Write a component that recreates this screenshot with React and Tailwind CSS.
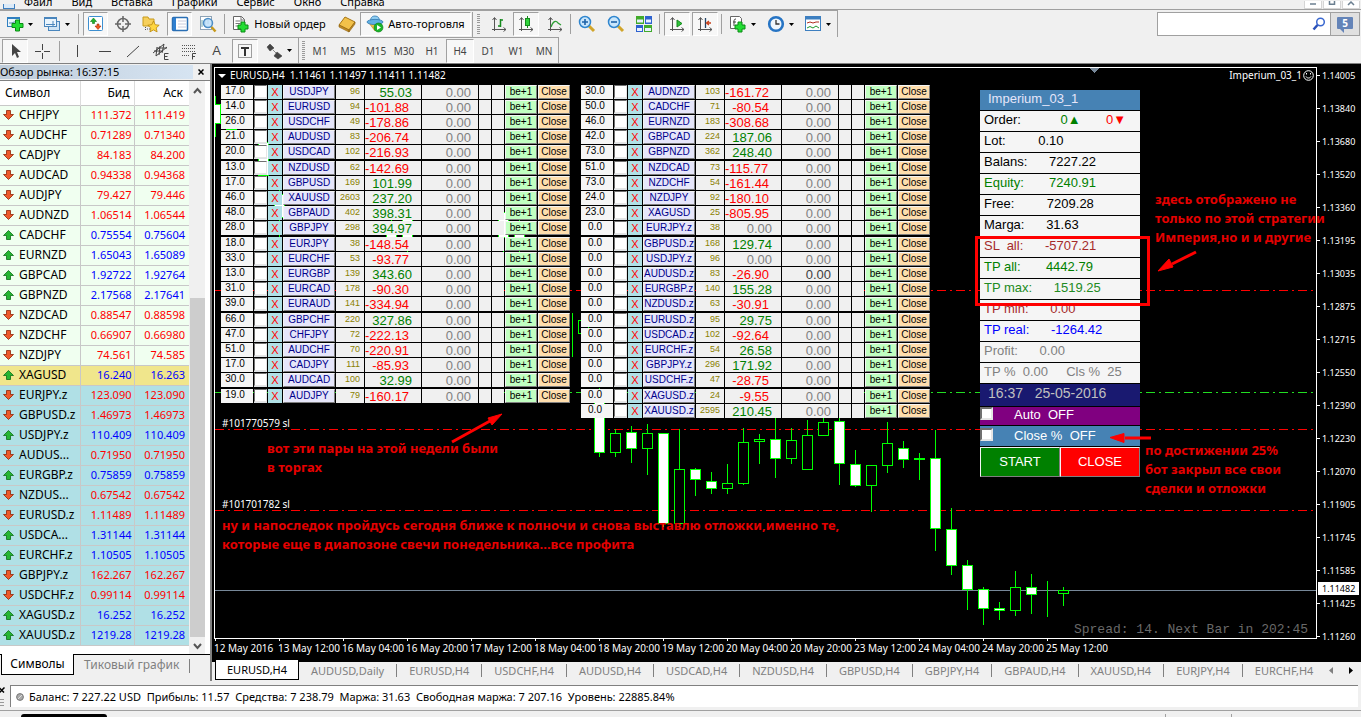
import React from "react";

const UI = "font-['Noto_Sans','Open_Sans',sans-serif]";

/* ---------- data ---------- */

const MENU = ["Файл", "Вид", "Вставка", "Графики", "Сервис", "Окно", "Справка"];

const QUOTES = [
  ["CHFJPY", "111.372", "111.419", 0], ["AUDCHF", "0.71289", "0.71340", 0],
  ["CADJPY", "84.183", "84.200", 0], ["AUDCAD", "0.94338", "0.94368", 0],
  ["AUDJPY", "79.427", "79.446", 0], ["AUDNZD", "1.06514", "1.06544", 0],
  ["CADCHF", "0.75554", "0.75604", 1], ["EURNZD", "1.65043", "1.65089", 1],
  ["GBPCAD", "1.92722", "1.92764", 1], ["GBPNZD", "2.17568", "2.17641", 1],
  ["NZDCAD", "0.88547", "0.88598", 0], ["NZDCHF", "0.66907", "0.66980", 0],
  ["NZDJPY", "74.561", "74.585", 0], ["XAGUSD", "16.240", "16.263", 1],
  ["EURJPY.z", "123.090", "123.090", 0], ["GBPUSD.z", "1.46973", "1.46973", 0],
  ["USDJPY.z", "110.409", "110.409", 1], ["AUDUS...", "0.71950", "0.71950", 0],
  ["EURGBP.z", "0.75859", "0.75859", 1], ["NZDUS...", "0.67542", "0.67542", 0],
  ["EURUSD.z", "1.11489", "1.11489", 0], ["USDCA...", "1.31144", "1.31144", 1],
  ["EURCHF.z", "1.10505", "1.10505", 1], ["GBPJPY.z", "162.267", "162.267", 0],
  ["USDCHF.z", "0.99114", "0.99114", 0], ["XAGUSD.z", "16.252", "16.252", 1],
  ["XAUUSD.z", "1219.28", "1219.28", 1],
];

const PAIRS_LEFT = [
  ["17.0", "USDJPY", "96", "55.03"], ["14.0", "EURUSD", "94", "-101.88"],
  ["26.0", "USDCHF", "49", "-178.86"], ["21.0", "AUDUSD", "83", "-206.74"],
  ["20.0", "USDCAD", "102", "-216.93"], ["13.0", "NZDUSD", "62", "-142.69"],
  ["17.0", "GBPUSD", "169", "101.99"], ["46.0", "XAUUSD", "2603", "237.20"],
  ["48.0", "GBPAUD", "402", "398.31"], ["28.0", "GBPJPY", "298", "394.97"],
  ["18.0", "EURJPY", "38", "-148.54"], ["33.0", "EURCHF", "53", "-93.77"],
  ["13.0", "EURGBP", "139", "343.60"], ["31.0", "EURCAD", "178", "-90.30"],
  ["39.0", "EURAUD", "141", "-334.94"], ["66.0", "GBPCHF", "220", "327.86"],
  ["47.0", "CHFJPY", "72", "-222.13"], ["51.0", "AUDCHF", "70", "-220.91"],
  ["17.0", "CADJPY", "111", "-85.93"], ["30.0", "AUDCAD", "100", "32.99"],
  ["19.0", "AUDJPY", "79", "-160.17"],
];

const PAIRS_RIGHT = [
  ["30.0", "AUDNZD", "103", "-161.72"], ["50.0", "CADCHF", "71", "-80.54"],
  ["46.0", "EURNZD", "183", "-308.68"], ["42.0", "GBPCAD", "224", "187.06"],
  ["73.0", "GBPNZD", "362", "248.40"], ["51.0", "NZDCAD", "73", "-115.77"],
  ["73.0", "NZDCHF", "54", "-161.44"], ["24.0", "NZDJPY", "92", "-180.10"],
  ["23.0", "XAGUSD", "25", "-805.95"], ["0.0", "EURJPY.z", "38", "0.00"],
  ["0.0", "GBPUSD.z", "168", "129.74"], ["0.0", "USDJPY.z", "96", "0.00"],
  ["0.0", "AUDUSD.z", "83", "-26.90", true], ["0.0", "EURGBP.z", "140", "155.28"],
  ["0.0", "NZDUSD.z", "63", "-30.91"], ["0.0", "EURUSD.z", "95", "29.75"],
  ["0.0", "USDCAD.z", "102", "-92.64"], ["0.0", "EURCHF.z", "54", "26.58"],
  ["0.0", "GBPJPY.z", "296", "171.92"], ["0.0", "USDCHF.z", "47", "-28.75"],
  ["0.0", "XAGUSD.z", "24", "-9.55"], ["0.0", "XAUUSD.z", "2595", "210.45"],
];

const STATS = [
  ["Lot:         0.10", "text-black"],
  ["Balans:      7227.22", "text-black"],
  ["Equity:       7240.91", "text-[#008000]"],
  ["Free:         7209.28", "text-black"],
  ["Marga:      31.63", "text-black"],
  ["SL  all:      -5707.21", "text-[#a52a2a]"],
  ["TP all:       4442.79", "text-[#008000]"],
  ["TP max:      1519.25", "text-[#228b22]"],
  ["TP min:      0.00", "text-[#a52a2a]"],
  ["TP real:      -1264.42", "text-[#0000ff]"],
  ["Profit:      0.00", "text-[#808080]"],
  ["TP %  0.00     Cls %  25", "text-[#808080]"],
];

const PRICES = [
  "1.14005", "1.13840", "1.13680", "1.13520", "1.13360", "1.13195", "1.13035", "1.12875", "1.12715",
  "1.12550", "1.12390", "1.12230", "1.12070", "1.11905", "1.11745", "1.11585", "1.11425", "1.11260",
];

const TIMES = [
  "12 May 2016", "13 May 12:00", "16 May 04:00", "16 May 20:00", "17 May 12:00", "18 May 04:00", "18 May 20:00",
  "19 May 12:00", "20 May 04:00", "20 May 20:00", "23 May 12:00", "24 May 04:00", "24 May 20:00", "25 May 12:00",
];

const CHART_TABS = [
  "EURUSD,H4", "AUDUSD,Daily", "EURUSD,H4", "USDCHF,H4", "AUDUSD,H4", "USDCAD,H4", "NZDUSD,H4",
  "GBPUSD,H4", "GBPJPY,H4", "GBPAUD,H4", "XAUUSD,H4", "EURJPY,H4", "EURCHF,H4",
];

/* filled?, high, body top, body bottom, low */
const FIRST_X = 384;
const CANDLES = [
  [1, 320, 330, 385, 389], [0, 361, 365, 385, 389], [1, 358, 364, 381, 395], [0, 356, 365, 381, 407],
  [1, 365, 365, 456, 459], [0, 361, 401, 456, 459], [1, 400, 401, 412, 428], [1, 404, 413, 421, 426],
  [0, 396, 415, 421, 426], [0, 360, 374, 416, 417], [0, 366, 371, 374, 396], [1, 350, 371, 391, 410],
  [0, 360, 372, 391, 396], [0, 352, 367, 402, 402], [0, 348, 354, 368, 368], [1, 350, 353, 396, 417],
  [1, 382, 396, 418, 419], [0, 397, 397, 418, 444], [0, 354, 375, 398, 405], [1, 373, 380, 392, 400],
  [0, 385, 390, 392, 412], [1, 362, 390, 461, 483], [1, 440, 461, 498, 507], [1, 492, 497, 522, 542],
  [1, 519, 521, 541, 557], [1, 534, 540, 543, 552], [0, 503, 519, 543, 548], [1, 506, 519, 527, 546],
  [1, 513, 526, 527, 549], [0, 519, 522, 526, 538],
];

/* older candles that lie under the order grid: x, high, body top, body bottom, low */
const HIDDEN_CANDLES = [
  [16, 55, 58, 62, 70], [48, 70, 74, 108, 110], [64, 108, 126, 150, 169], [176, 140, 166, 172, 180],
  [192, 140, 144, 170, 184], [288, 140, 144, 170, 184], [304, 148, 166, 172, 190],
];

/* ---------- toolbar ---------- */

const PRESSED = "border border-b-white border-l-[#a0a0a0] border-r-white border-t-[#a0a0a0] bg-[#f7f7f7]";

function Tool({ label, w = "w-7", on, children }) {
  return (
    <button
      type="button"
      aria-label={label}
      className={`flex h-6 shrink-0 items-center justify-center gap-1 ${w} ${on ? PRESSED : ""}`}
    >
      {children}
    </button>
  );
}

const Icon = ({ children, size = 18 }) => (
  <svg width={size} height={size} viewBox="0 0 18 18" fill="none" className="shrink-0">
    {children}
  </svg>
);
const Caret = () => (
  <svg width="5" height="3" viewBox="0 0 5 3" className="shrink-0">
    <path d="M0 0h5L2.5 3z" fill="#000" />
  </svg>
);
const Sep = () => <span className="h-5 w-px shrink-0 bg-[#a0a0a0]" />;
const Grip = () => (
  <span className="flex h-5 w-[3px] shrink-0 flex-col justify-between">
    {Array.from({ length: 10 }, (_, i) => (
      <span key={i} className="h-px w-full bg-[#9a9a9a]" />
    ))}
  </span>
);

const Plus = ({ x = 7, y = 7 }) => (
  <path
    d={`M${x + 3} ${y}h4v3h3v4h-3v3h-4v-3h-3v-4h3z`}
    fill="#22dd33" stroke="#0a8a14" strokeWidth="1"
  />
);
const Axes = () => (
  <path d="M4.5 16V3M2.5 5l2-2.5L6.5 5M2 14.5h14M13.5 12.5l2.5 2-2.5 2" stroke="#555" />
);

function MainToolbar() {
  return (
    <div className="flex h-[27px] items-center border-r border-t border-[#a0a0a0] pr-px">
      <Tool label="Новый график" w="w-[38px]">
        <Icon>
          <rect x="1.5" y="2.5" width="12" height="9" fill="#eaf5fd" stroke="#2f7fc0" />
          <path d="M2 3.500h11" stroke="#2f7fc0" />
          <path d="M3 8h3l2-1h4" stroke="#58a" />
          <path d="M9.500 5h4v3.500h3.500v4h-3.500V16h-4v-3.500H6v-4h3.500z" fill="#22dd33" stroke="#0a8a14" />
        </Icon>
        <Caret />
      </Tool>
      <Tool label="Профили" w="w-9">
        <Icon>
          <rect x="5.5" y="6.5" width="11" height="9" fill="#cfe4f5" stroke="#4a86bd" />
          <rect x="1.5" y="2.5" width="12" height="9" fill="#eaf5fd" stroke="#4a86bd" />
          <path d="M2 3.500h11M3 9.5h9M10 6v5" stroke="#4a86bd" />
        </Icon>
        <Caret />
      </Tool>
      <span className="w-1" />
      <Sep />
      <span className="w-1" />
      <Tool label="Обзор рынка" w="w-[25px]" on>
        <Icon>
          <rect x="1.5" y="1.5" width="14" height="14" rx="1" fill="#fff" stroke="#3d8fd0" />
          <path d="M6.5 3l3 3.500H7.500v2h-2v-2h-2z" fill="#1fb52b" stroke="#0b7a17" strokeWidth=".6" />
          <path d="M11 14.500l-3-3.500h2V9h2v2h2z" fill="#f2581e" stroke="#a02c08" strokeWidth=".6" />
        </Icon>
      </Tool>
      <Tool label="Окно данных" w="w-[30px]">
        <Icon>
          <circle cx="9" cy="9" r="5.5" stroke="#666" strokeWidth="1.5" />
          <path d="M9 1v6M9 11v6M1 9h6M11 9h6" stroke="#666" strokeWidth="1.5" />
        </Icon>
      </Tool>
      <Tool label="Навигатор" w="w-[25px]">
        <Icon>
          <path d="M1 2h5l1 2h5v7H1z" fill="#f6cf5b" stroke="#c79a1c" />
          <path d="M3.500 12v4M5 14h3" stroke="#555" strokeDasharray="1 1" />
          <path d="M11.500 6l1.700 3.700 4 .5-3 2.700.9 4-3.600-2-3.600 2 .9-4-3-2.700 4-.5z" fill="#ffd640" stroke="#b8860b" strokeWidth=".8" />
        </Icon>
      </Tool>
      <span className="w-1" />
      <Tool label="Терминал" w="w-[25px]" on>
        <Icon>
          <rect x="1.5" y="2.5" width="15" height="13" rx="1" fill="#fff" stroke="#2a6fb5" strokeWidth="1.5" />
          <path d="M2 3h3v12H2z" fill="#2f7fd0" />
          <path d="M7 6h8M7 9h8M7 12h8" stroke="#ccd" />
        </Icon>
      </Tool>
      <Tool label="Тестер стратегий" w="w-8">
        <Icon>
          <rect x="1.5" y="1.5" width="11" height="13" fill="#fff" stroke="#8ea3b5" />
          <path d="M3 5v7M6 4v8M9 3v6" stroke="#7aa" />
          <circle cx="9" cy="8" r="4.5" fill="#bfe0fa" fillOpacity=".85" stroke="#4d8ec6" strokeWidth="1.5" />
          <path d="M12.500 12l4 4.500" stroke="#c79a1c" strokeWidth="2.5" />
        </Icon>
      </Tool>
      <Sep />
      <Tool label="Новый ордер" w="w-[108px]">
        <Icon>
          <path d="M1.500 1.500h8l3 3v10h-11z" fill="#fff" stroke="#666" />
          <path d="M9 1.500V5h3.500M3.500 6h6M3.500 8.500h5M3.500 11h3" stroke="#777" />
          <Plus x={6} y={7} />
        </Icon>
        <span className="text-[11px] leading-4">Новый ордер</span>
      </Tool>
      <span className="w-px" />
      <Tool label="Редактор MetaQuotes" w="w-[25px]">
        <Icon>
          <path d="M1 10l6-8 10 5-6 8z" fill="#f2c14a" stroke="#a67514" />
          <path d="M1 10v2l10 5v-2zM11 15v2L17 9V7z" fill="#c78f22" stroke="#8a5f10" strokeWidth=".6" />
        </Icon>
      </Tool>
      <span className="w-px" />
      <Tool label="Авто-торговля" w="w-[111px]" on>
        <Icon>
          <path d="M3 8l6 8 6-8z" fill="#efc343" stroke="#b3851a" strokeWidth=".6" />
          <path d="M4.500 6c0-2.500 1-5 4.500-5s4.500 2.500 4.500 5z" fill="#8fcdf2" stroke="#3079b0" strokeWidth=".8" />
          <ellipse cx="9" cy="7" rx="8" ry="2.6" fill="#5fb0e4" stroke="#3079b0" strokeWidth=".8" />
          <circle cx="12.5" cy="12.5" r="4.5" fill="#19b52a" stroke="#0b7a17" strokeWidth=".6" />
          <path d="M11 10l4 2.500-4 2.500z" fill="#fff" />
        </Icon>
        <span className="text-[11px] leading-4">Авто-торговля</span>
      </Tool>
      <span className="w-px" />
      <span className="h-[25px] w-px bg-[#a0a0a0]" />
      <span className="w-1" />
      <Grip />
      <span className="w-1" />
      <Tool label="Бары" w="w-[29px]">
        <Icon>
          <Axes />
          <path d="M10.500 4v8M8 11h2.500M10.500 5H13" stroke="#168a1e" strokeWidth="1.5" />
        </Icon>
      </Tool>
      <Tool label="Свечи" w="w-[26px]" on>
        <Icon>
          <Axes />
          <path d="M10.500 1v12" stroke="#168a1e" />
          <rect x="8.5" y="3.5" width="4" height="7" fill="#2fd43a" stroke="#168a1e" />
        </Icon>
      </Tool>
      <Tool label="Линия" w="w-[31px]">
        <Icon>
          <Axes />
          <path d="M5 12c2-6 5-7 7-4l3 2" stroke="#30a038" strokeWidth="1.3" />
        </Icon>
      </Tool>
      <Sep />
      <Tool label="Увеличить" w="w-8">
        <Icon>
          <path d="M10 10l6 6" stroke="#d1a52a" strokeWidth="3" />
          <circle cx="7" cy="7" r="5.5" fill="#c9e6fb" stroke="#2f86cf" strokeWidth="1.5" />
          <path d="M4 7h6M7 4v6" stroke="#1e63a8" strokeWidth="1.6" />
        </Icon>
      </Tool>
      <Tool label="Уменьшить" w="w-[26px]">
        <Icon>
          <path d="M10 10l6 6" stroke="#d1a52a" strokeWidth="3" />
          <circle cx="7" cy="7" r="5.5" fill="#c9e6fb" stroke="#2f86cf" strokeWidth="1.5" />
          <path d="M4 7h6" stroke="#1e63a8" strokeWidth="1.6" />
        </Icon>
      </Tool>
      <Tool label="Мозаика" w="w-[30px]">
        <Icon>
          <path d="M1 1h8v8H1zM9 10h8v7H9z" fill="#41ab2a" />
          <path d="M10 1h7v8h-7zM1 10h7v7H1z" fill="#2d62cf" />
          <path d="M2 6h6M11 6h5M2 14.500h5M10 14.500h6" stroke="#e8f0ff" strokeWidth="3" />
        </Icon>
      </Tool>
      <Sep />
      <span className="w-1" />
      <Tool label="Автопрокрутка" w="w-[26px]" on>
        <Icon>
          <Axes />
          <path d="M9 5l5 3.500L9 12z" fill="#2fc43a" stroke="#168a1e" />
        </Icon>
      </Tool>
      <span className="w-[2px]" />
      <Tool label="Сдвиг графика" w="w-[26px]" on>
        <Icon>
          <Axes />
          <path d="M9.500 3v10" stroke="#246" strokeWidth="1.3" />
          <path d="M15 8h-4M13 6l-2.500 2 2.500 2" stroke="#c8401a" strokeWidth="1.3" />
        </Icon>
      </Tool>
      <span className="w-[3px]" />
      <Sep />
      <Tool label="Индикаторы" w="w-10">
        <Icon>
          <path d="M1.500 1.500h9l2 2v10h-11z" fill="#fff" stroke="#666" />
          <path d="M7 4c-2 0-2 1-2 3v4M4 7h3" stroke="#444" />
          <Plus x={6} y={7} />
        </Icon>
        <Caret />
      </Tool>
      <Tool label="Периоды" w="w-9">
        <Icon>
          <circle cx="9" cy="9" r="6.8" fill="#eef6fd" stroke="#2674c4" strokeWidth="2.6" />
          <path d="M9 5v4h3.500" stroke="#333" strokeWidth="1.3" />
        </Icon>
        <Caret />
      </Tool>
      <Tool label="Шаблоны" w="w-[38px]">
        <Icon>
          <rect x="1.5" y="1.5" width="15" height="14" fill="#fff" stroke="#3d7fc0" />
          <path d="M2 3h14" stroke="#3d7fc0" strokeWidth="3" />
          <path d="M3 8l3-1 3 1 3-1h3" stroke="#b03020" />
          <path d="M3 13l3-1.500 3 1.500 3-2 3 2" stroke="#1c9a2a" />
        </Icon>
        <Caret />
      </Tool>
    </div>
  );
}

const FRAMES = ["M1", "M5", "M15", "M30", "H1", "H4", "D1", "W1", "MN"];

function DrawingToolbar() {
  return (
    <div className="flex h-[26px] w-[559px] items-center border-r border-t border-[#a0a0a0] pl-[2px]">
      <Tool label="Курсор" w="w-[26px]" on>
        <Icon>
          <path d="M6 2v12l3-3 2 5 2-1-2-5h4z" fill="#444" />
        </Icon>
      </Tool>
      <Tool label="Перекрестие" w="w-7">
        <Icon>
          <path d="M9.500 2v6M9.500 11v6M2 9.500h6M11 9.500h6" stroke="#444" />
        </Icon>
      </Tool>
      <span className="w-[3px]" />
      <Sep />
      <span className="w-[3px]" />
      <Tool label="Вертикальная линия">
        <Icon><path d="M9.500 3v12" stroke="#444" /></Icon>
      </Tool>
      <Tool label="Горизонтальная линия">
        <Icon><path d="M3 9.500h12" stroke="#444" /></Icon>
      </Tool>
      <Tool label="Трендовая линия">
        <Icon><path d="M3 15L15 4" stroke="#444" /></Icon>
      </Tool>
      <Tool label="Равноудаленный канал">
        <Icon>
          <path d="M1 11L12 2M4 14l11-9M5 5l-1 9M8 4l-1 9M12 2l-2 9M2 9h9M5 6h10" stroke="#444" />
          <path d="M16.500 11.500h-4v6h4M12.500 14.500h3" stroke="#444" />
        </Icon>
      </Tool>
      <Tool label="Линии Фибоначчи">
        <Icon>
          <path d="M2 3.500h14M2 6.500h14M2 9.500h14M2 13.500h8" stroke="#555" strokeDasharray="1 1" />
          <path d="M16 11.500h-3.500v6M12 14.500h3" stroke="#444" />
        </Icon>
      </Tool>
      <Tool label="Текст">
        <span className="font-['Liberation_Sans',sans-serif] text-[13px] leading-4 text-[#444]">A</span>
      </Tool>
      <span className="w-[2px]" />
      <Tool label="Текстовая метка" w="w-[26px]" on>
        <Icon>
          <rect x="2.5" y="2.5" width="13" height="13" stroke="#444" strokeDasharray="1 1" />
          <path d="M5 6h8M9 6v8" stroke="#333" strokeWidth="2" />
        </Icon>
      </Tool>
      <Tool label="Стрелки" w="w-10">
        <Icon>
          <path d="M2 5l3-3 4 4-4 3zM8 8l6 6M9 14l3-4 5 4-4 3z" fill="#444" stroke="#444" strokeWidth=".6" />
        </Icon>
        <Caret />
      </Tool>
      <span className="h-[25px] w-px bg-[#a0a0a0]" />
      <span className="w-[3px]" />
      <Grip />
      <span className="w-px" />
      {FRAMES.map((f) => (
        <button
          key={f}
          type="button"
          className={`flex h-6 w-7 shrink-0 items-center justify-center text-[10px] leading-4 text-[#444] ${f === "H4" ? PRESSED : ""}`}
        >
          {f}
        </button>
      ))}
    </div>
  );
}

function TopBars() {
  return (
    <header className="shrink-0">
      <div className="flex h-[9px] items-end overflow-hidden">
        <span className="ml-[3px] mr-[9px] h-[5px] w-3 shrink-0 border-x border-b border-[#3d7fc0] bg-[#dbeaf8]" />
        <nav className="flex items-end gap-[19px]">
          {MENU.map((m) => (
            <button key={m} type="button" className="text-[11px] leading-[14px]">{m}</button>
          ))}
        </nav>
        <div className="ml-auto flex h-2 shrink-0 gap-px pr-px">
          {["Свернуть", "Развернуть", "Закрыть"].map((l, i) => (
            <button key={l} type="button" aria-label={l} className="flex h-2 w-[18px] justify-center border border-t-0 border-[#d5d5d5] bg-white">
              <svg width="8" height="5" viewBox="0 0 8 5" fill="none" stroke="#6b7f90" strokeWidth="1.5">
                {i === 0 && <path d="M1 3h6" />}
                {i === 1 && <path d="M1.500 0v3.200h5V0" />}
                {i === 2 && <path d="M1 4l3-3 3 3" />}
              </svg>
            </button>
          ))}
        </div>
      </div>
      <div className="flex h-[54px] items-start justify-between border-t border-[#a0a0a0]">
        <div className="flex flex-col items-start">
          <MainToolbar />
          <DrawingToolbar />
        </div>
        <div className="mr-px mt-[2px] flex h-6 border border-[#a0a0a0] bg-white">
          <label className="flex items-center">
            <input type="text" aria-label="Поиск" className="h-5 w-[154px] bg-transparent px-1 text-[11px] outline-none" />
            <svg width="14" height="14" viewBox="0 0 14 14" fill="none" className="mr-1">
              <circle cx="8.5" cy="5" r="3.8" stroke="#3a68d0" strokeWidth="1.5" />
              <path d="M5.500 8L1.500 12.500" stroke="#2a50b8" strokeWidth="2.5" />
            </svg>
          </label>
          <button type="button" aria-label="Сообщения" className="flex w-[29px] items-center justify-center border-l border-[#a0a0a0] bg-[#e0e0e0]">
            <span className="relative mb-[3px] flex h-3 w-4 items-center justify-center rounded-[1px] bg-[#6484b8] font-bold text-[10px] leading-3 text-white">
              5
              <svg width="5" height="4" viewBox="0 0 5 4" className="absolute left-[3px] top-3">
                <path d="M0 0h4v4z" fill="#6484b8" />
              </svg>
            </span>
          </button>
        </div>
      </div>
    </header>
  );
}

/* ---------- market watch ---------- */

const Arrow = ({ up }) => (
  <svg width="11" height="10" viewBox="0 0 11 10" className="shrink-0">
    {up ? (
      <path d="M5.500.5l5 5h-3v4h-4v-4h-3z" fill="#25b632" stroke="#0d6d17" strokeWidth=".8" />
    ) : (
      <path d="M5.500 9.500l-5-5h3v-4h4v4h3z" fill="#ee5a2a" stroke="#8f2506" strokeWidth=".8" />
    )}
  </svg>
);

function quoteTone(i) {
  if (i < 13) return "bg-[#f0fff0]";
  if (i === 13) return "bg-[#f0e68c]";
  return "bg-[#b0e0e6]";
}

function MarketWatch() {
  return (
    <aside className="flex w-[210px] shrink-0 flex-col border-t border-[#808080]">
      <div className="flex h-4 items-center justify-between pr-[3px]">
        <h2 className="h-[14px] flex-1 bg-linear-to-r from-[#bfcddb] to-[#d6e4f2] text-[11px] leading-[14px] text-black">
          Обзор рынка: 16:37:15
        </h2>
        <button type="button" aria-label="Закрыть панель" className="ml-[2px] flex size-3 items-center justify-center">
          <svg width="6" height="6" viewBox="0 0 6 6" stroke="#000" strokeWidth="1.5"><path d="M.5.5l5 5M5.500.5l-5 5" /></svg>
        </button>
      </div>
      <div className="flex min-h-0 flex-1 border-t border-[#808080] bg-white">
        <div className="min-w-0 flex-1">
          <table className="w-full table-fixed border-collapse">
            <colgroup>
              <col className="w-20" />
              <col className="w-[54px]" />
              <col />
            </colgroup>
            <thead>
              <tr className="h-6 border-b border-[#c8c8c8] text-[12px] leading-4">
                <th className="border-r border-[#dcdcdc] p-0 pl-[5px] text-left font-normal">Символ</th>
                <th className="border-r border-[#dcdcdc] p-0 pr-1 text-right font-normal">Бид</th>
                <th className="p-0 pr-[6px] text-right font-normal">Аск</th>
              </tr>
            </thead>
            <tbody>
              {QUOTES.map(([s, bid, ask, up], i) => {
                const tone = up ? "text-[#0000ff]" : "text-[#ff0000]";
                return (
                  <tr key={s} className={`h-5 border-b border-[#c8c8c8] ${quoteTone(i)}`}>
                    <td className="border-r border-[#c8c8c8] p-0">
                      <div className="flex items-center gap-[5px] pl-[3px] text-[12px] leading-4">
                        <Arrow up={up} />
                        {s}
                      </div>
                    </td>
                    <td className={`border-r border-[#c8c8c8] p-0 pr-[2px] text-right text-[11px] leading-4 ${tone}`}>{bid}</td>
                    <td className={`p-0 pr-1 text-right text-[11px] leading-4 ${tone}`}>{ask}</td>
                  </tr>
                );
              })}
            </tbody>
          </table>
        </div>
        <div className="mr-[5px] flex w-4 shrink-0 flex-col items-center bg-[#f0f0f0]">
          <svg width="9" height="17" viewBox="0 0 9 17" fill="none" stroke="#555" strokeWidth="2"><path d="M1 12l3.500-4L8 12" /></svg>
          <div className="flex-[201]" />
          <div className="w-[15px] flex-[340] bg-[#cdcdcd]" />
          <svg width="9" height="17" viewBox="0 0 9 17" fill="none" stroke="#555" strokeWidth="2"><path d="M1 7l3.500 4L8 7" /></svg>
        </div>
      </div>
      <div className="flex h-[27px] items-start border-t border-black pl-px text-[12px] leading-4">
        <button type="button" className="-mt-px h-[21px] w-[73px] border border-t-0 border-black bg-white">Символы</button>
        <button type="button" className="h-5 pl-[10px] pr-[10px] text-[#808080]">Тиковый график</button>
        <span className="mt-1 h-[14px] w-px bg-[#808080]" />
      </div>
    </aside>
  );
}

/* ---------- order grid ---------- */

const BEVEL = "border border-b-[#808080] border-l-[#f4f4f4] border-r-[#808080] border-t-[#f4f4f4]";

function padded(v) {
  return "  ".repeat(7 - v.length) + v;
}
function profitTone(v) {
  if (v === "0.00") return "text-[#808080]";
  return v.startsWith("-") ? "text-[#ff0000]" : "text-[#008000]";
}

function PairGrid({ rows, label }) {
  return (
    <table aria-label={label} className="block font-['Liberation_Sans',Arial,sans-serif]">
      <tbody className="block">
        {rows.map(([lot, sym, n, profit, dark]) => (
          <tr
            key={sym}
            className="mb-px grid h-[14px] grid-cols-[32px_13px_14px_52px_28px_56px_56px_12px_12px_32px_32px] gap-px nth-[5n]:mb-[2px]"
          >
            <td className="bg-[#f5f5f5] pr-1 text-center text-[10px] leading-3 text-black">{lot}</td>
            <td className="bg-[#dfe3e6]">
              <input type="checkbox" aria-label={`Выбрать ${sym}`} className="block size-[13px] appearance-none border border-b-[#e5e5e5] border-l-[#707070] border-r-[#e5e5e5] border-t-[#707070] bg-white" />
            </td>
            <td className="bg-[#b0e0e6] text-center text-[11px] leading-[14px] text-[#ff0000]">X</td>
            <td>
              <button type="button" className={`block h-[14px] w-full bg-[#e6e6fa] text-center text-[10px] leading-3 text-[#00008b] ${BEVEL}`}>{sym}</button>
            </td>
            <td className="bg-[#f0f0f0] pr-1 text-right text-[9px] leading-[13px] text-[#8b8000]">{n}</td>
            <td className={`h-[14px] whitespace-pre bg-[#f0f0f0] text-[13px] leading-4 ${profitTone(profit)}`}>{padded(profit)}</td>
            <td className={`h-[14px] whitespace-pre bg-[#f0f0f0] pl-[2px] text-[13px] leading-4 ${dark ? "text-[#404040]" : "text-[#808080]"}`}>{padded("0.00")}</td>
            <td className="bg-[#f0f0f0]" />
            <td className="bg-[#f0f0f0]" />
            <td>
              <button type="button" className={`block h-[14px] w-full bg-[#c1ffc1] text-center text-[10px] leading-3 text-black ${BEVEL}`}>be+1</button>
            </td>
            <td>
              <button type="button" className={`block h-[14px] w-full bg-[#ffdead] text-center text-[10px] leading-3 text-black ${BEVEL}`}>Close</button>
            </td>
          </tr>
        ))}
      </tbody>
    </table>
  );
}

/* ---------- expert panel ---------- */

const CHECK = "size-[13px] shrink-0 appearance-none border-2 border-b-[#e5e5e5] border-l-[#707070] border-r-[#e5e5e5] border-t-[#707070] bg-white";

function ExpertPanel() {
  return (
    <section className="w-40 shrink-0 font-['Liberation_Sans',Arial,sans-serif] text-[13px] leading-[18px]">
      <h3 className="mb-px h-5 bg-[#4682b4] pl-2 text-[#e6e6fa]">Imperium_03_1</h3>
      <div className="flex flex-col gap-px">
        <p className="h-5 whitespace-pre bg-[#f5f5f5] pl-1 text-black">
          {"Order:           "}
          <span className="text-[#008000]">0▲</span>
          {"       "}
          <span className="text-[#ff0000]">0▼</span>
        </p>
        {STATS.map(([t, tone]) => (
          <p key={t} className={`h-5 whitespace-pre bg-[#f5f5f5] pl-1 ${tone}`}>{t}</p>
        ))}
        <p className="h-[22px] whitespace-pre bg-[#191970] pl-2 text-[14px] text-[#c0c0c0]">{"16:37   25-05-2016"}</p>
        <label className="flex h-[18px] items-start bg-[#800080] text-white">
          <input type="checkbox" className={CHECK} />
          <span className="whitespace-pre pl-[21px] leading-4">{"Auto  OFF"}</span>
        </label>
        <label className="flex h-5 items-start bg-[#4682b4] pt-[2px] text-white">
          <input type="checkbox" className={CHECK} />
          <span className="whitespace-pre pl-[21px] leading-4">{"Close %  OFF"}</span>
        </label>
        <div className="flex h-[30px]">
          <button type="button" className={`w-1/2 bg-[#008000] text-white ${BEVEL}`}>START</button>
          <button type="button" className={`w-1/2 bg-[#ff0000] text-white ${BEVEL}`}>CLOSE</button>
        </div>
      </div>
    </section>
  );
}

/* ---------- chart ---------- */

function ChartCanvas() {
  return (
    <svg className="absolute inset-0 size-full" shapeRendering="crispEdges">
      {[[222, "#ff0000"], [324, "#22dd22"], [361, "#ff0000"], [442, "#ff0000"]].map(([y, c]) => (
        <line key={y} x1="0" x2="99.7%" y1={y + 0.5} y2={y + 0.5} stroke={c} strokeDasharray="9 4 2 4" />
      ))}
      <line x1="0" x2="100%" y1="522.5" y2="522.5" stroke="#778899" />
      <path d="M0.500 28v41" stroke="#00ff00" />
      <path d="M0 37h5v19H0z" fill="#fff" />
      <path d="M0 36.500h5.500v19H0" fill="none" stroke="#00ff00" />
      {HIDDEN_CANDLES.map(([x, hi, top, bot, lo]) => (
        <g key={x} stroke="#00ff00">
          <path d={`M${x + 0.5} ${hi}V${lo}`} />
          <rect x={x - 4.5} y={top + 0.5} width="10" height={bot - top - 1} fill="#fff" />
        </g>
      ))}
      <rect x="363.5" y="252.5" width="10" height="13" fill="none" stroke="#00ff00" />
      <path d="M357.500 245v44" stroke="#00ff00" />
      {CANDLES.map(([fill, hi, top, bot, lo], i) => {
        const x = FIRST_X + i * 16;
        return (
          <g key={x} stroke="#00ff00">
            <path d={`M${x + 0.5} ${hi}V${lo}`} />
            <rect x={x - 4.5} y={top + 0.5} width="10" height={Math.max(bot - top - 1, 0)} fill={fill ? "#fff" : "#000"} />
          </g>
        );
      })}
      <path d="M874 0h11l-5.500 5z" fill="#778899" />
    </svg>
  );
}

const NOTE = "absolute whitespace-nowrap font-bold text-[13px] leading-[19px] text-[#e60000]";

function Annotations() {
  return (
    <div className="pointer-events-none absolute inset-0">
      <div className="absolute left-[760px] top-[168px] h-[70px] w-[175px] border-[3px] border-[#ff0000]" />
      <p className={`${NOTE} left-[940px] top-[122px]`}>
        здесь отображено не<br />только по этой стратегии<br />Империя,но и и другие
      </p>
      <p className={`${NOTE} left-[930px] top-[373px]`}>
        по достижении 25%<br />бот закрыл все свои<br />сделки и отложки
      </p>
      <p className={`${NOTE} left-[52px] top-[371px]`}>
        вот эти пары на этой недели были<br />в торгах
      </p>
      <p className={`${NOTE} left-[7px] top-[448px]`}>
        ну и напоследок пройдусь сегодня ближе к полночи и снова выставлю отложки,именно те,
        <br />
        которые еще в диапозоне свечи понедельника...все профита
      </p>
      <p className="absolute left-[7px] top-[347px] text-[10px] leading-4 text-white">#101770579 sl</p>
      <p className="absolute left-[7px] top-[428px] text-[10px] leading-4 text-white">#101701782 sl</p>
      <p className="absolute bottom-0 right-[8px] whitespace-pre font-['Liberation_Mono',monospace] text-[13px] leading-4 text-[#696969]">
        Spread: 14. Next Bar in 202:45
      </p>
      <svg className="absolute inset-0 size-full" stroke="#ff0000" fill="#ff0000">
        <path d="M981 184l-24 12" strokeWidth="3" />
        <path d="M943 203l11-12 4 8z" />
        <path d="M936 370h-26" strokeWidth="3" />
        <path d="M895 369.500l14-4v9z" />
        <path d="M237 374l38-21" strokeWidth="3" />
        <path d="M287 346l-14 4 4 7z" />
      </svg>
    </div>
  );
}

function ChartWindow() {
  return (
    <main className="flex min-w-0 flex-1 flex-col border-l-2 border-t border-[#808080]">
      <div className="flex min-h-0 flex-1 flex-col bg-black pl-[2px] pt-[3px] text-white">
        <div className="flex min-h-0 flex-1">
          <div className="relative z-10 min-w-0 flex-1 border border-white">
            <ChartCanvas />
            <div className="relative">
              <div className="flex h-[17px] items-start pl-[3px] pr-[2px] text-[10px] leading-[15px]">
                <svg width="8" height="15" viewBox="0 0 8 15" className="mr-1"><path d="M0 6h8L4 10z" fill="#fff" /></svg>
                <span className="whitespace-pre">{"EURUSD,H4  1.11461 1.11497 1.11411 1.11482"}</span>
                <span className="ml-auto flex items-center gap-px">
                  Imperium_03_1
                  <svg width="11" height="11" viewBox="0 0 11 11" fill="none" stroke="#fff">
                    <circle cx="5.5" cy="5.5" r="4.8" />
                    <path d="M3 6.500c1 2 4 2 5 0M3.500 3v1.500M7.500 3v1.500" />
                  </svg>
                </span>
              </div>
              <div className="flex items-start pl-[6px]">
                <PairGrid rows={PAIRS_LEFT} label="Пары, левая таблица" />
                <div className="w-[11px] shrink-0" />
                <PairGrid rows={PAIRS_RIGHT} label="Пары, правая таблица" />
                <div className="mt-[5px] pl-[50px]">
                  <ExpertPanel />
                </div>
              </div>
            </div>
            <Annotations />
          </div>
          <div className="relative w-11 shrink-0 text-[9px] leading-[18px]">
            {PRICES.map((p) => (
              <div key={p} className="flex h-[33px] items-start">
                <span className="mr-[2px] mt-2 h-px w-[3px] bg-white" />
                {p}
              </div>
            ))}
            <span className="absolute left-px top-[515px] h-[13px] w-[41px] bg-white pl-1 leading-[13px] text-black">1.11482</span>
          </div>
        </div>
        <div className="flex h-[21px] text-[10px] leading-[14px]">
          {TIMES.map((t) => (
            <span key={t} className="w-16 shrink-0 whitespace-nowrap">
              <span className="ml-px block h-[2px] w-px bg-white" />
              {t}
            </span>
          ))}
        </div>
      </div>
      <div className="flex h-[21px] items-start border-t-2 border-black pl-[3px] text-[11px] leading-[19px] text-[#808080]">
        {CHART_TABS.map((t, i) =>
          i === 0 ? (
            <button key={i} type="button" className="-mt-[2px] h-5 w-[84px] shrink-0 border border-t-0 border-black bg-white text-black">{t}</button>
          ) : (
            <button key={i} type="button" className="flex h-[17px] shrink-0 items-center">
              <span className="px-3">{t}</span>
              {i < 12 && <span className="h-[13px] w-px bg-[#808080]" />}
            </button>
          )
        )}
        <div className="ml-auto flex h-[17px] items-center gap-4 pr-2">
          <svg width="4" height="7" viewBox="0 0 4 7"><path d="M4 0v7L0 3.500z" fill="#808080" /></svg>
          <svg width="4" height="7" viewBox="0 0 4 7"><path d="M0 0v7l4-3.500z" fill="#000" /></svg>
        </div>
      </div>
    </main>
  );
}

/* ---------- terminal ---------- */

function Terminal() {
  return (
    <footer className="shrink-0">
      <div className="flex h-[30px] items-start border-b border-[#a0a0a0] pt-[4px]">
        <div className="flex w-[10px] shrink-0 flex-col gap-[2px] pt-[2px]">
          <svg width="5" height="6" viewBox="0 0 5 6" stroke="#000" strokeWidth="1.5"><path d="M-1 .5l5 5M4.500.5l-5 5" /></svg>
          <span className="mt-1 h-px w-1 bg-[#999]" />
          <span className="h-px w-1 bg-[#999]" />
          <span className="h-px w-1 bg-[#999]" />
        </div>
        <div className="mr-[3px] flex h-[22px] flex-1 items-center border-l border-t border-[#808080] bg-white pl-[5px] text-[11px] leading-4">
          <svg width="8" height="8" viewBox="0 0 8 8" className="mr-[5px]">
            <circle cx="4" cy="4" r="3.4" fill="#aaa" stroke="#777" />
            <path d="M2 6l4-4" stroke="#ddd" />
          </svg>
          <span className="whitespace-pre">
            {"Баланс: 7 227.22 USD  Прибыль: 11.57  Средства: 7 238.79  Маржа: 31.63  Свободная маржа: 7 207.16  Уровень: 22885.84%"}
          </span>
        </div>
      </div>
      <div className="flex h-[6px] items-end">
        <span className="ml-[21px] h-[3px] w-[86px] rounded-t-[3px] bg-black" />
        <span className="ml-auto h-[3px] w-px bg-[#a0a0a0]" />
        <span className="ml-[65px] mr-[129px] h-[3px] w-px bg-[#a0a0a0]" />
      </div>
    </footer>
  );
}

export default function App() {
  return (
    <div className={`flex h-screen flex-col overflow-hidden bg-[#f0f0f0] text-black ${UI}`}>
      <TopBars />
      <div className="flex min-h-0 flex-1">
        <MarketWatch />
        <ChartWindow />
      </div>
      <Terminal />
    </div>
  );
}
